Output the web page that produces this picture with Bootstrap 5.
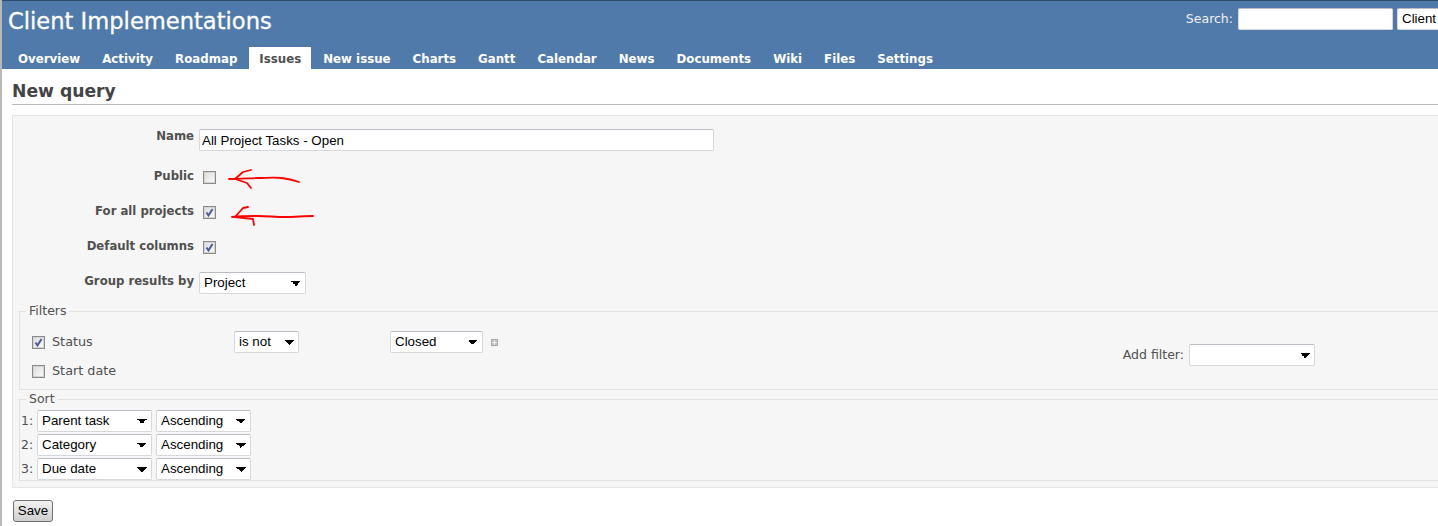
<!DOCTYPE html>
<html lang="en">
<head>
<meta charset="utf-8">
<title>New query</title>
<link href="https://cdn.jsdelivr.net/npm/bootstrap@5.3.0/dist/css/bootstrap.min.css" rel="stylesheet">
<style>
html,body{overflow:hidden;height:526px;background:#fff}
body{font-family:"DejaVu Sans",Verdana,sans-serif;font-size:12.5px;line-height:16px;color:#505050;border-left:2px solid #b8b8b8}
.page-wrap{width:1536px;position:relative}
.top-head{height:69px;background:#507aaa;border-top:1px solid #2f4a6b;position:relative}
.head-row{height:46px;padding:0 0 0 6px}
.app-title{font-size:22.6px;line-height:38px;font-weight:400;color:#fff;margin:-6px 0 0;-webkit-text-stroke:.3px #fff}
.search-box{color:#f0f0f0;font-size:12.5px;height:21px;margin-top:-10px;margin-right:21px}
.search-box .nat-input{margin-left:1px}
.tabs-row{padding-left:6px;height:22px}
.tab-link{display:block;font-weight:700;font-size:11.8px;line-height:24px;height:22px;padding:0 10px;margin-right:2px;color:#fff;text-decoration:none;background:transparent}
.tab-link.on{background:#fff;color:#505050}
.main-area{padding:0 0 0 10px}
.page-title{font-size:17.2px;line-height:24px;font-weight:700;color:#444;margin:10px 0 10px;padding-bottom:1px;border-bottom:1px solid #bbb}
.query-box{background:#f6f6f6;border:1px solid #e4e4e4;height:373px;padding:12px 0 0 6px}
.form-line{display:flex;align-items:flex-start}
.form-line+.form-line{margin-top:19px}
.form-line.first+.form-line{margin-top:17px}
.lbl{width:175px;height:16px;flex:none;text-align:right;font-weight:700;font-size:11.7px;color:#505050;margin-right:5px}
.nat-input,.nat-select{font-family:"Liberation Sans",Arial,sans-serif;font-size:13.33px;color:#000;background-color:#fff;border:1px solid #d5d7db;border-top-color:#b9bcc2;border-radius:2px;height:22px;padding:0 2px;line-height:20px;display:block;outline:0}
.nat-select{appearance:none;-webkit-appearance:none;background-image:linear-gradient(45deg,transparent 50%,#000 50%),linear-gradient(-45deg,transparent 50%,#000 50%);background-size:5px 5px,5px 5px;background-position:right 9px top 8px,right 4px top 8px;background-repeat:no-repeat;padding-left:4px;padding-right:14px}
.name-input{width:515px;margin-top:1px}
.nat-check{appearance:none;-webkit-appearance:none;width:13px;height:13px;border:1px solid #8a8a8a;box-shadow:inset 0 0 0 1px #d4d4d4;background:linear-gradient(135deg,#dcdcdc,#fbfbfb);margin:3px 0 0 4px;display:block;flex:none;border-radius:0}
.nat-check:checked{background-image:url("data:image/svg+xml,%3Csvg xmlns='http://www.w3.org/2000/svg' viewBox='0 0 11 11'%3E%3Cpath d='M2.5 5.5l2 3 4-6.5' fill='none' stroke='%234a5a9a' stroke-width='2'/%3E%3C/svg%3E"),linear-gradient(135deg,#dcdcdc,#fbfbfb);background-size:100% 100%}
.w-group{width:107px;margin-top:-1px}
.field-frame{border:1px solid #e0e0e0;border-right:0;margin:0;padding:0 0 0 12px;min-width:0}
.field-frame legend{float:none;width:auto;font-size:12.5px;line-height:16px;margin:0 0 0 -6px;padding:0 3px;color:#505050}
.frame-filters{margin-top:9px;height:87px;padding-top:12px}
.filter-line{height:22px;display:flex;align-items:center;color:#505050}
.filter-line+.filter-line{margin-top:7px}
.filter-line .nat-check{margin:0 7px 0 0}
.filter-name{width:182px;flex:none;font-size:12.8px}
.w-op{width:65px;margin-right:91px}
.w-val{width:93px}
.mini-add{display:block;margin-left:8px;flex:none}
.filters-flex{width:1283px}
.add-filter-box{margin-bottom:4px}
.w-addf{width:126px;margin-left:5px}
.frame-sort{margin-top:1px;height:90px;padding:3px 0 0 1px}
.frame-sort legend{margin-left:5px}
.sort-line{height:22px;display:flex;align-items:center;margin-bottom:2px;color:#505050}
.sort-num{width:16px;flex:none}
.w-key{width:115px;margin-right:4px}
.w-dir{width:95px}
.save-btn{font-family:"Liberation Sans",Arial,sans-serif;font-size:13.33px;color:#000;height:22px;width:40px;margin:12px 0 0 1px;padding:0;line-height:18px;border:1px solid #707070;border-radius:3px;background:linear-gradient(#f2f2f2,#cfcfcf);display:block}
.mark-layer{position:absolute;left:-2px;top:0;pointer-events:none}
</style>
</head>
<body>
<div class="page-wrap">
  <header class="top-head">
    <div class="head-row d-flex align-items-center justify-content-between">
      <h1 class="app-title">Client Implementations</h1>
      <div class="search-box d-flex align-items-center gap-1">
        <span>Search:</span>
        <input class="nat-input" type="text" style="width:155px">
        <select class="nat-select" style="width:120px"><option>Client</option></select>
      </div>
    </div>
    <nav class="tabs-row d-flex">
      <a class="tab-link" href="#">Overview</a>
      <a class="tab-link" href="#">Activity</a>
      <a class="tab-link" href="#">Roadmap</a>
      <a class="tab-link on" href="#">Issues</a>
      <a class="tab-link" href="#">New issue</a>
      <a class="tab-link" href="#">Charts</a>
      <a class="tab-link" href="#">Gantt</a>
      <a class="tab-link" href="#">Calendar</a>
      <a class="tab-link" href="#">News</a>
      <a class="tab-link" href="#">Documents</a>
      <a class="tab-link" href="#">Wiki</a>
      <a class="tab-link" href="#">Files</a>
      <a class="tab-link" href="#">Settings</a>
    </nav>
  </header>
  <main class="main-area">
    <h2 class="page-title">New query</h2>
    <form class="query-box">
      <div class="form-line first"><label class="lbl">Name</label><input class="nat-input name-input" type="text" value="All Project Tasks - Open"></div>
      <div class="form-line"><label class="lbl">Public</label><input class="nat-check" type="checkbox"></div>
      <div class="form-line"><label class="lbl">For all projects</label><input class="nat-check" type="checkbox" checked></div>
      <div class="form-line"><label class="lbl">Default columns</label><input class="nat-check" type="checkbox" checked></div>
      <div class="form-line"><label class="lbl">Group results by</label><select class="nat-select w-group"><option>Project</option></select></div>

      <fieldset class="field-frame frame-filters">
        <legend>Filters</legend>
        <div class="d-flex align-items-center filters-flex">
          <div class="flex-grow-1">
            <div class="filter-line">
              <input class="nat-check" type="checkbox" checked><span class="filter-name">Status</span>
              <select class="nat-select w-op"><option>is not</option></select>
              <select class="nat-select w-val"><option>Closed</option></select>
              <svg class="mini-add" width="7" height="7" viewBox="0 0 7 7"><rect width="7" height="7" fill="#a8a8a8"/><rect x="1" y="1" width="5" height="5" fill="#c4c4c4"/><path d="M3.5 1.5v4M1.5 3.5h4" stroke="#fff"/></svg>
            </div>
            <div class="filter-line">
              <input class="nat-check" type="checkbox"><span class="filter-name">Start date</span>
            </div>
          </div>
          <div class="d-flex align-items-center add-filter-box"><span>Add filter:</span><select class="nat-select w-addf"><option></option></select></div>
        </div>
      </fieldset>

      <fieldset class="field-frame frame-sort">
        <legend>Sort</legend>
        <div class="sort-line"><span class="sort-num">1:</span><select class="nat-select w-key"><option>Parent task</option></select><select class="nat-select w-dir"><option>Ascending</option></select></div>
        <div class="sort-line"><span class="sort-num">2:</span><select class="nat-select w-key"><option>Category</option></select><select class="nat-select w-dir"><option>Ascending</option></select></div>
        <div class="sort-line"><span class="sort-num">3:</span><select class="nat-select w-key"><option>Due date</option></select><select class="nat-select w-dir"><option>Ascending</option></select></div>
      </fieldset>
    </form>
    <button class="save-btn" type="button">Save</button>
  </main>
  <svg class="mark-layer" width="340" height="240" viewBox="0 0 340 240" fill="none" stroke="#f00" stroke-width="1.8" stroke-linecap="round" stroke-linejoin="round">
    <path d="M299 182C293 180 288 179 282 178C273 177 266 178 258 178C250 178 242 179 229 179"/>
    <path d="M251 170L243 172L235 179L247 183L251 188"/>
    <path d="M313 216C304 216 295 217 285 217C276 217 267 216 258 216C250 216 241 216 232 217"/>
    <path d="M248 207L243 208L235 217L253 219L254 225"/>
  </svg>
</div>
</body>
</html>
